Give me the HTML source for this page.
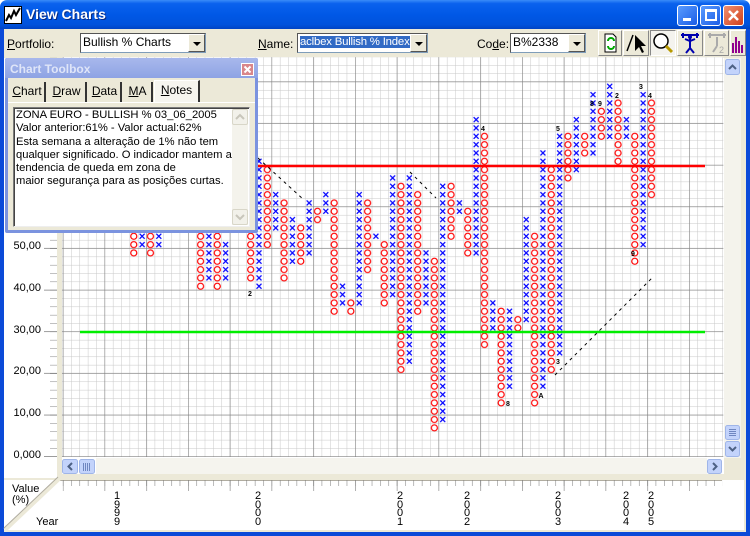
<!DOCTYPE html>
<html><head><meta charset="utf-8"><style>
*{margin:0;padding:0;box-sizing:border-box}
body{width:750px;height:536px;overflow:hidden;background:#fff;font-family:"Liberation Sans",Arial,sans-serif;font-size:12px;position:relative}
.abs{position:absolute}
.title{left:0;top:0;width:750px;height:29px;background:linear-gradient(#3a8cf8 0%,#0a62ee 12%,#0058e6 50%,#0052dc 85%,#0043c4 100%);border-radius:7px 7px 0 0}
.title span{position:absolute;left:26px;top:6px;color:#fff;font-weight:bold;font-size:14px;text-shadow:1px 1px #0a2a80}
.wb{position:absolute;top:5px;width:21px;height:21px;border:1px solid #fff;border-radius:3px;background:linear-gradient(135deg,#5a9cff,#1b5de6)}
.frameL{left:0;top:29px;width:4px;height:507px;background:#0b4ad8}
.frameR{left:746px;top:29px;width:4px;height:507px;background:#0b4ad8}
.frameB{left:0;top:532px;width:750px;height:4px;background:#0b4ad8}
.tb{left:4px;top:29px;width:742px;height:29px;background:#ece9d8}
.lbl{position:absolute;top:8px;font-size:12px;color:#000}
.combo{position:absolute;top:4px;height:20px;background:#fff;border:1px solid #7f9db9;border-top-color:#555;border-left-color:#555;font-size:12px;line-height:17px;padding-left:2px;white-space:nowrap;overflow:hidden}
.combo .b{position:absolute;right:0;top:0;width:17px;height:18px;background:#ece9d8;border:1px solid #fff;border-right-color:#555;border-bottom-color:#555}
.combo .b:after{content:"";position:absolute;left:4px;top:7px;border:4px solid transparent;border-top:4px solid #000;border-bottom:0}
.ib{position:absolute;top:1px;height:26px;border:1px solid #fff;border-right-color:#888;border-bottom-color:#888;background:#ece9d8}
.tbx{left:5px;top:58px;width:253px;height:175px;background:#7b93df;border-radius:2px}
.tab{position:absolute;top:4px;height:20px;font-size:12px;line-height:19px;text-align:center;border-right:2px solid #333}
</style></head><body>
<div class="abs title"><svg class="abs" style="left:4px;top:6px" width="18" height="18"><rect x="0.5" y="0.5" width="17" height="17" fill="#fff" stroke="#000"/><path d="M2 15 L5 9 L7 12 L10 5 L12 9 L16 2" stroke="#000" stroke-width="2" fill="none"/></svg><span>View Charts</span>
<div class="wb" style="left:677px"><div style="position:absolute;left:5px;top:12px;width:8px;height:3px;background:#fff"></div></div>
<div class="wb" style="left:700px"><div style="position:absolute;left:4px;top:3px;width:12px;height:12px;border:2px solid #fff;border-top-width:3px"></div></div>
<div class="wb" style="left:723px;background:linear-gradient(135deg,#f09070,#d0401c)"><svg width="19" height="19"><path d="M5 5L14 14M14 5L5 14" stroke="#fff" stroke-width="2.5"/></svg></div>
</div>
<div class="abs frameL"></div><div class="abs frameR"></div><div class="abs frameB"></div>
<div class="abs tb">
<div class="lbl" style="left:3px"><u>P</u>ortfolio:</div>
<div class="combo" style="left:76px;width:126px">Bullish % Charts<div class="b"></div></div>
<div class="lbl" style="left:254px"><u>N</u>ame:</div>
<div class="combo" style="left:293px;width:131px;font-size:11.4px;letter-spacing:-0.2px"><span style="background:#316ac5;color:#fff">aclbex Bullish % Index</span><div class="b"></div></div>
<div class="lbl" style="left:473px">Co<u>d</u>e:</div>
<div class="combo" style="left:506px;width:76px">B%2338<div class="b"></div></div>
<div class="ib" style="left:594px;width:24px"><svg width="22" height="24"><path d="M6 3h8l3 3v15H6z" fill="#fff" stroke="#000"/><path d="M9 10a3 3 0 0 1 6 0M15 15a3 3 0 0 1 -6 0" stroke="#0a0" stroke-width="2" fill="none"/></svg></div>
<div class="ib" style="left:619px;width:26px"><svg width="24" height="24"><path d="M3 20L9 4" stroke="#000" stroke-width="1.5"/><path d="M11 4v16l4-4 3 6 2-1-3-6h5z" fill="#000"/></svg></div>
<div class="ib" style="left:646px;width:26px;border-color:#888;border-right-color:#fff;border-bottom-color:#fff;background:#f4f3ee"><svg width="24" height="24"><circle cx="10" cy="10" r="7" fill="#fff" stroke="#000" stroke-width="1.5"/><path d="M15 15l6 6" stroke="#b89a00" stroke-width="3"/></svg></div>
<div class="ib" style="left:673px;width:26px"><svg width="24" height="24"><path d="M3 4h18M5 2v5M19 2v5M12 6v11M7 8l5 2 5-2M12 17l-4 5M12 17l4 5" stroke="#0000b0" stroke-width="2" fill="none"/><circle cx="12" cy="6" r="2" fill="#0000b0"/></svg></div>
<div class="ib" style="left:700px;width:25px"><svg width="24" height="24"><path d="M3 4h18M5 2v5M19 2v5M12 6v9M12 15l-4 6" stroke="#aaa" stroke-width="2" fill="none"/><text x="14" y="22" font-size="9" fill="#aaa" font-family="Liberation Sans">2</text></svg></div>
<div class="ib" style="left:726px;width:16px"><svg width="14" height="24"><path d="M2 22V12M5 22V6M8 22V10M11 22V14" stroke="#90008f" stroke-width="2"/></svg></div>
</div>

<svg class="abs" style="left:0;top:0" width="750" height="536">
<defs>
<pattern id="pmin" patternUnits="userSpaceOnUse" width="1" height="1"><path d="M0 0H1M0 0V1" stroke="#c8c8c8" stroke-width="0.12" fill="none"/></pattern>
<pattern id="pmaj" patternUnits="userSpaceOnUse" width="5" height="5"><path d="M0 0H5M0 0V5" stroke="#808080" stroke-width="0.14" fill="none"/></pattern>
<pattern id="px" patternUnits="userSpaceOnUse" width="1" height="1"><path d="M0.2 0.2L0.8 0.8M0.8 0.2L0.2 0.8" stroke="#0000ff" stroke-width="0.15" fill="none"/></pattern>
<pattern id="po" patternUnits="userSpaceOnUse" width="1" height="1"><circle cx="0.5" cy="0.5" r="0.36" stroke="#ff0000" stroke-width="0.14" fill="none"/></pattern>
<pattern id="tkx" patternUnits="userSpaceOnUse" width="1" height="20"><path d="M0 0V6" stroke="#808080" stroke-width="0.13"/></pattern>
<pattern id="tkX" patternUnits="userSpaceOnUse" width="5" height="20"><path d="M0 0V11" stroke="#808080" stroke-width="0.15"/></pattern>
<pattern id="tky" patternUnits="userSpaceOnUse" width="20" height="1"><path d="M0 0H20" stroke="#808080" stroke-width="0.13"/></pattern>
<pattern id="tkY" patternUnits="userSpaceOnUse" width="20" height="5"><path d="M0 0H20" stroke="#606060" stroke-width="0.15"/></pattern>
</defs>
<rect x="56" y="58" width="6" height="422" fill="#ece9d8"/>
<rect x="56" y="58" width="1" height="422" fill="#fff"/>
<rect x="62" y="474" width="664" height="6" fill="#ece9d8"/>
<rect x="724" y="58" width="22" height="422" fill="#ece9d8"/>
<g transform="translate(62.8,457) scale(8.35,-8.33)">
<rect x="-0.1" y="0" width="79.2" height="48" fill="#fff"/>
<rect x="-0.1" y="0" width="79.2" height="48" fill="url(#pmin)"/>
<rect x="-0.1" y="0" width="79.2" height="48" fill="url(#pmaj)"/>
<g>
<rect x="8" y="24" width="1" height="7" fill="url(#po)"/>
<rect x="9" y="25" width="1" height="3" fill="url(#px)"/>
<rect x="10" y="24" width="1" height="4" fill="url(#po)"/>
<rect x="11" y="25" width="1" height="3" fill="url(#px)"/>
<rect x="16" y="20" width="1" height="8" fill="url(#po)"/>
<rect x="17" y="21" width="1" height="7" fill="url(#px)"/>
<rect x="18" y="20" width="1" height="8" fill="url(#po)"/>
<rect x="19" y="21" width="1" height="5" fill="url(#px)"/>
<rect x="22" y="21" width="1" height="9" fill="url(#po)"/>
<rect x="23" y="20" width="1" height="16" fill="url(#px)"/>
<rect x="24" y="25" width="1" height="10" fill="url(#po)"/>
<rect x="25" y="27" width="1" height="5" fill="url(#px)"/>
<rect x="26" y="21" width="1" height="10" fill="url(#po)"/>
<rect x="27" y="23" width="1" height="6" fill="url(#px)"/>
<rect x="28" y="23" width="1" height="5" fill="url(#po)"/>
<rect x="29" y="24" width="1" height="7" fill="url(#px)"/>
<rect x="30" y="28" width="1" height="2" fill="url(#po)"/>
<rect x="31" y="29" width="1" height="3" fill="url(#px)"/>
<rect x="32" y="17" width="1" height="14" fill="url(#po)"/>
<rect x="33" y="18" width="1" height="3" fill="url(#px)"/>
<rect x="34" y="17" width="1" height="2" fill="url(#po)"/>
<rect x="35" y="18" width="1" height="14" fill="url(#px)"/>
<rect x="36" y="22" width="1" height="9" fill="url(#po)"/>
<rect x="37" y="26" width="1" height="1" fill="url(#px)"/>
<rect x="38" y="18" width="1" height="8" fill="url(#po)"/>
<rect x="39" y="19" width="1" height="15" fill="url(#px)"/>
<rect x="40" y="10" width="1" height="23" fill="url(#po)"/>
<rect x="41" y="11" width="1" height="23" fill="url(#px)"/>
<rect x="42" y="17" width="1" height="15" fill="url(#po)"/>
<rect x="43" y="18" width="1" height="7" fill="url(#px)"/>
<rect x="44" y="3" width="1" height="21" fill="url(#po)"/>
<rect x="45" y="4" width="1" height="29" fill="url(#px)"/>
<rect x="46" y="26" width="1" height="7" fill="url(#po)"/>
<rect x="47" y="29" width="1" height="2" fill="url(#px)"/>
<rect x="48" y="24" width="1" height="6" fill="url(#po)"/>
<rect x="49" y="24" width="1" height="17" fill="url(#px)"/>
<rect x="50" y="13" width="1" height="26" fill="url(#po)"/>
<rect x="51" y="15" width="1" height="4" fill="url(#px)"/>
<rect x="52" y="6" width="1" height="12" fill="url(#po)"/>
<rect x="53" y="8" width="1" height="10" fill="url(#px)"/>
<rect x="54" y="15" width="1" height="2" fill="url(#po)"/>
<rect x="55" y="16" width="1" height="13" fill="url(#px)"/>
<rect x="56" y="6" width="1" height="21" fill="url(#po)"/>
<rect x="57" y="8" width="1" height="29" fill="url(#px)"/>
<rect x="58" y="10" width="1" height="25" fill="url(#po)"/>
<rect x="59" y="12" width="1" height="27" fill="url(#px)"/>
<rect x="60" y="33" width="1" height="6" fill="url(#po)"/>
<rect x="61" y="34" width="1" height="7" fill="url(#px)"/>
<rect x="62" y="36" width="1" height="3" fill="url(#po)"/>
<rect x="63" y="36" width="1" height="8" fill="url(#px)"/>
<rect x="64" y="38" width="1" height="4" fill="url(#po)"/>
<rect x="65" y="38" width="1" height="7" fill="url(#px)"/>
<rect x="66" y="35" width="1" height="8" fill="url(#po)"/>
<rect x="67" y="38" width="1" height="3" fill="url(#px)"/>
<rect x="68" y="23" width="1" height="16" fill="url(#po)"/>
<rect x="69" y="25" width="1" height="19" fill="url(#px)"/>
<rect x="70" y="31" width="1" height="12" fill="url(#po)"/>
</g>
</g>
<line x1="62" y1="166" x2="705" y2="166" stroke="#ff0000" stroke-width="2.5"/>
<line x1="80" y1="332" x2="705" y2="332" stroke="#00ee00" stroke-width="2.5"/>
<g stroke="#000" stroke-width="1" stroke-dasharray="3,4">
<line x1="258" y1="158" x2="304" y2="200"/>
<line x1="410" y1="172" x2="436" y2="198"/>
<line x1="555" y1="375" x2="654" y2="276"/>
</g>
<g font-family="Liberation Sans" font-size="7" font-weight="bold" fill="#000" text-anchor="middle">
<text x="250" y="296">2</text><text x="483" y="131">4</text><text x="508" y="406">8</text>
<text x="541" y="398">A</text><text x="558" y="364">3</text><text x="558" y="131">5</text>
<text x="641" y="89">3</text><text x="650" y="98">4</text><text x="617" y="98">2</text>
<text x="592" y="106">8</text><text x="600" y="106">9</text><text x="633" y="256">9</text>
</g>
<g transform="translate(44,457) scale(1,-8.33)">
<rect x="6" y="0" width="7" height="48" fill="url(#tky)"/>
<rect x="0" y="0" width="13" height="48" fill="url(#tkY)"/>
</g>
<g font-family="Liberation Sans" font-size="11" fill="#000" text-anchor="end">
<text x="41" y="249">50,00</text><text x="41" y="291">40,00</text><text x="41" y="333">30,00</text>
<text x="41" y="374">20,00</text><text x="41" y="416">10,00</text><text x="41" y="458">0,000</text>
</g>
<rect x="724" y="58" width="17" height="400" fill="#f4f3ec"/>
<g fill="#c3d3fb" stroke="#9fb5e8">
<rect x="725.5" y="59.5" width="14" height="15" rx="2"/>
<rect x="725.5" y="425.5" width="14" height="14" rx="2"/>
<rect x="725.5" y="441.5" width="14" height="15" rx="2"/>
<rect x="62.5" y="459.5" width="15" height="14" rx="2"/>
<rect x="79.5" y="459.5" width="15" height="14" rx="2"/>
<rect x="707.5" y="459.5" width="14" height="14" rx="2"/>
</g>
<g stroke="#4d6185" stroke-width="2" fill="none">
<path d="M729 69l3.5-3.5 3.5 3.5"/><path d="M729 447l3.5 3.5 3.5-3.5"/>
<path d="M72 463l-3.5 3.5 3.5 3.5"/><path d="M713 463l3.5 3.5-3.5 3.5"/>
</g>
<g stroke="#6f86c0" stroke-width="1"><path d="M729 429.5h7M729 431.5h7M729 433.5h7M729 435.5h7"/><path d="M83.5 463v8M85.5 463v8M87.5 463v8M89.5 463v8"/></g>
<rect x="96" y="458" width="611" height="16" fill="#f4f3ec" opacity="0.9"/>
<rect x="4" y="478" width="742" height="2" fill="#ece9d8"/>
<line x1="58" y1="480.5" x2="722" y2="480.5" stroke="#b0aca0"/>
<g transform="translate(62.8,480) scale(8.35,1)">
<rect x="0" y="0" width="79" height="12" fill="url(#tkx)"/>
<rect x="0" y="0" width="79" height="12" fill="url(#tkX)"/>
</g>
<path d="M5 530 L60 478" stroke="#ece9d8" stroke-width="4"/>
<path d="M4 528 L58 477" stroke="#b0aca0" stroke-width="1"/>
<rect x="4" y="530" width="742" height="2" fill="#ece9d8"/>
<rect x="744" y="478" width="2" height="54" fill="#ece9d8"/>
<g font-family="Liberation Sans" font-size="11" fill="#000">
<text x="12" y="492">Value</text><text x="12" y="503">(%)</text><text x="36" y="525">Year</text>
</g>
<g font-family="Liberation Sans" font-size="11" fill="#000" text-anchor="middle">
<g transform="translate(117,0)"><text y="499">1</text><text y="508">9</text><text y="516">9</text><text y="525">9</text></g>
<g transform="translate(258,0)"><text y="499">2</text><text y="508">0</text><text y="516">0</text><text y="525">0</text></g>
<g transform="translate(400,0)"><text y="499">2</text><text y="508">0</text><text y="516">0</text><text y="525">1</text></g>
<g transform="translate(467,0)"><text y="499">2</text><text y="508">0</text><text y="516">0</text><text y="525">2</text></g>
<g transform="translate(558,0)"><text y="499">2</text><text y="508">0</text><text y="516">0</text><text y="525">3</text></g>
<g transform="translate(626,0)"><text y="499">2</text><text y="508">0</text><text y="516">0</text><text y="525">4</text></g>
<g transform="translate(651,0)"><text y="499">2</text><text y="508">0</text><text y="516">0</text><text y="525">5</text></g>
</g>
</svg>

<div class="abs tbx">
<div style="position:absolute;left:0;top:0;width:253px;height:20px;background:linear-gradient(#a8b8ec,#8ea3e4);border-radius:2px 2px 0 0"></div>
<div style="position:absolute;left:5px;top:4px;color:#dfe5f8;font-weight:bold;font-size:12px">Chart Toolbox</div>
<div style="position:absolute;left:236px;top:5px;width:13px;height:13px;border:1px solid #fff;background:#d9868a"><svg width="11" height="11" style="position:absolute;left:0;top:0"><path d="M2.5 2.5l6 6M8.5 2.5l-6 6" stroke="#fff" stroke-width="2"/></svg></div>
<div style="position:absolute;left:3px;top:20px;width:247px;height:152px;background:#ece9d8">
<div class="tab" style="left:2px;width:36px"><u>C</u>hart</div>
<div class="tab" style="left:40px;width:39px"><u>D</u>raw</div>
<div class="tab" style="left:81px;width:33px"><u>D</u>ata</div>
<div class="tab" style="left:116px;width:29px"><u>M</u>A</div>
<div class="tab" style="left:146px;width:46px;top:2px;height:22px;background:#f6f5ef;border-left:1px solid #fff;border-top:1px solid #fff;border-right:2px solid #333"><u>N</u>otes</div>
<div style="position:absolute;left:0;top:24px;width:247px;height:1px;background:#fff"></div>
<div style="position:absolute;left:5px;top:29px;width:237px;height:120px;background:#fff;border:1px solid #7a7a7a;border-right-color:#eee;border-bottom-color:#eee;box-shadow:inset 1px 1px #444"></div>
<div style="position:absolute;left:8px;top:31px;font-size:11.2px;line-height:13.3px;color:#000;white-space:nowrap">ZONA EURO - BULLISH % 03_06_2005<br>Valor anterior:61% - Valor actual:62%<br>Esta semana a alteração de 1% não tem<br>qualquer significado. O indicador mantem a<br>tendencia de queda em zona de<br>maior segurança para as posições curtas.</div>
<div style="position:absolute;left:224px;top:31px;width:16px;height:116px;background:#f4f3ec"></div>
<div style="position:absolute;left:224px;top:31px;width:16px;height:16px;border:1px solid #d8d6c8;border-radius:2px;background:#f2f1ea"><svg width="14" height="14"><path d="M3 9l4-4 4 4" stroke="#c8c6bb" stroke-width="2" fill="none"/></svg></div>
<div style="position:absolute;left:224px;top:131px;width:16px;height:16px;border:1px solid #d8d6c8;border-radius:2px;background:#f2f1ea"><svg width="14" height="14"><path d="M3 5l4 4 4-4" stroke="#c8c6bb" stroke-width="2" fill="none"/></svg></div>
</div>
</div>
</body></html>
